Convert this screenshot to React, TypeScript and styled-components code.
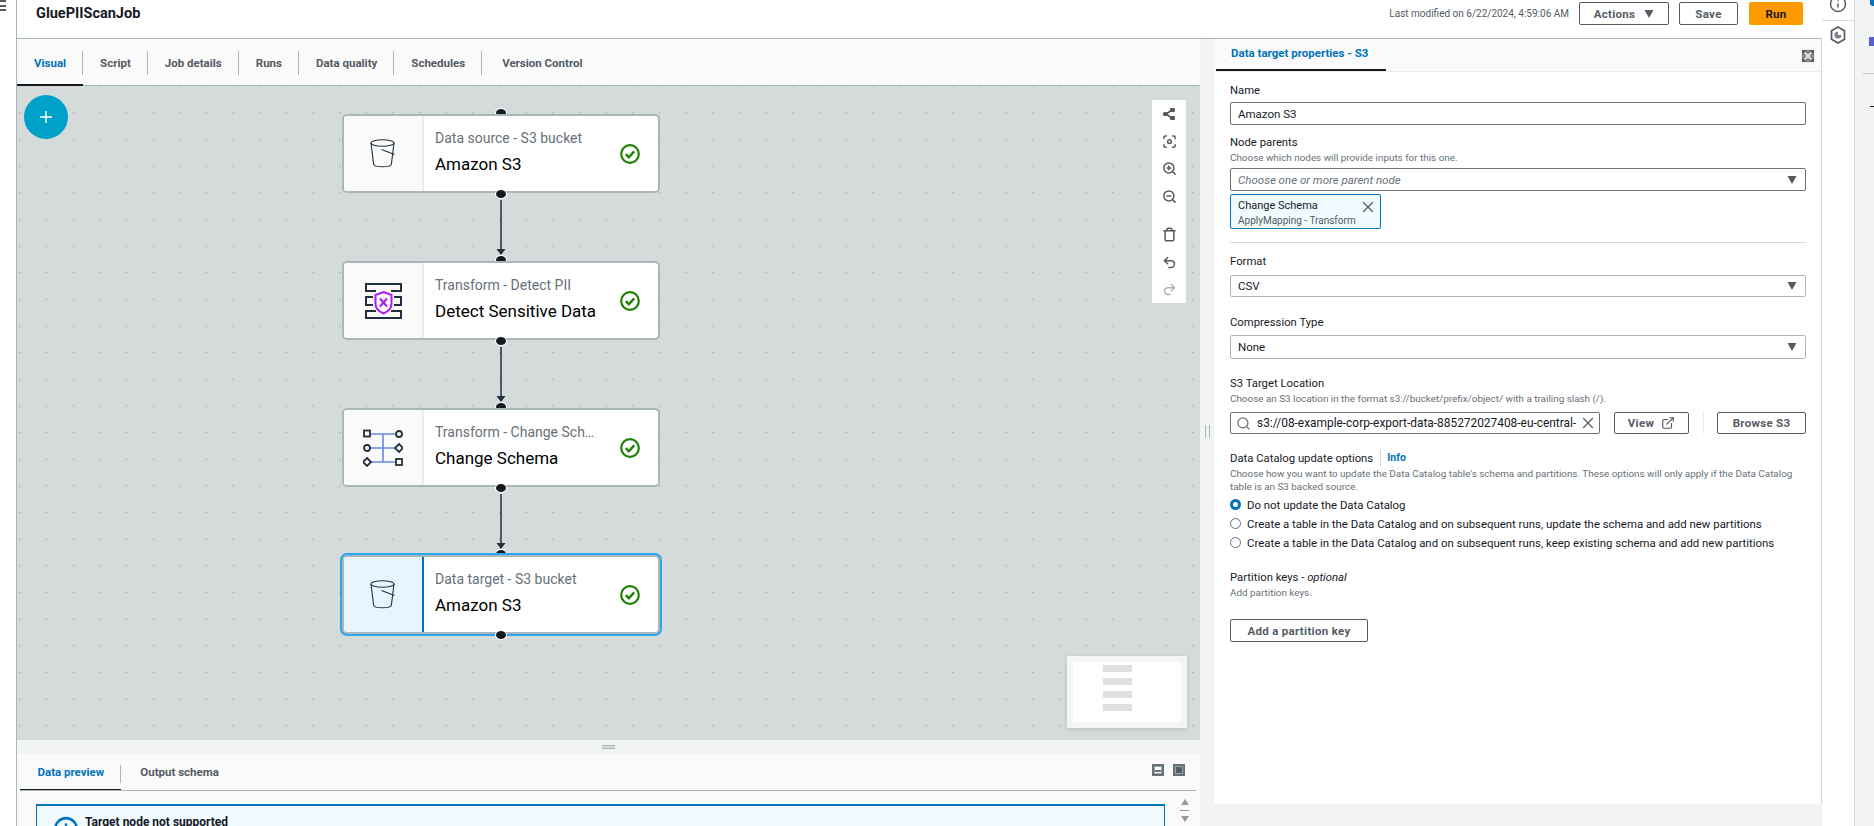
import React from 'react';
import styled, { createGlobalStyle } from 'styled-components';
import { ExternalLink, Focus, Info, Redo2, Search, Trash, Undo2, X, ZoomIn, ZoomOut } from 'lucide-react';

const GlobalStyle = createGlobalStyle`
  html, body {
    margin: 0;
    padding: 0;
    background: #fff;
  }
  body {
    font-family: Roboto, "Liberation Sans", sans-serif;
    color: #16191f;
    overflow: hidden;
  }
  * {
    box-sizing: border-box;
  }
`;

const JOB_TABS = ['Visual', 'Script', 'Job details', 'Runs', 'Data quality', 'Schedules', 'Version Control'];

const RADIO_OPTIONS = [
  'Do not update the Data Catalog',
  'Create a table in the Data Catalog and on subsequent runs, update the schema and add new partitions',
  'Create a table in the Data Catalog and on subsequent runs, keep existing schema and add new partitions',
];

function BucketIcon() {
  return (
    <svg width="26" height="29" viewBox="0 0 26 29" fill="none" stroke="#232f3e" strokeWidth="1.1">
      <ellipse cx="12.5" cy="4" rx="11.5" ry="3.2" />
      <path d="M1 4l2.6 21c.2 1.6 4 2.8 8.9 2.8s8.7-1.2 8.9-2.8L24 4" />
      <path d="M11.5 10.5l13 5" />
    </svg>
  );
}

function DetectPiiIcon() {
  return (
    <svg width="37" height="36" viewBox="0 0 37 36" fill="none">
      <g stroke="#232f3e" strokeWidth="2">
        <path d="M11 8H1V1h35v7H26" />
        <path d="M8 14H1v8h7M29 14h7v8h-7" />
        <path d="M11 28H1v7h35v-7H26" />
      </g>
      <g stroke="#a91cf5" strokeWidth="2">
        <path d="M18.5 9l8 3v9c0 4.5-3.5 7.5-8 9.5-4.5-2-8-5-8-9.5v-9z" />
        <path d="M15 15.5l7 8M22 15.5l-7 8" />
      </g>
    </svg>
  );
}

function ChangeSchemaIcon() {
  return (
    <svg width="40" height="38" viewBox="0 0 40 38" fill="none">
      <g stroke="#688ae8" strokeWidth="1.6">
        <path d="M7 5h25M7 19h25M7 33h25M20 5v28" />
      </g>
      <g stroke="#232f3e" strokeWidth="1.8" fill="#fafafa">
        <rect x="1" y="1.5" width="6" height="6" />
        <circle cx="4" cy="19" r="3" />
        <path d="M4 29l4 4-4 4-4-4z" />
        <circle cx="36" cy="5" r="3" />
        <path d="M36 15l4 4-4 4-4-4z" />
        <rect x="33" y="30" width="6" height="6" />
      </g>
    </svg>
  );
}

function CheckIcon() {
  return (
    <svg width="20" height="20" viewBox="0 0 20 20" fill="none" stroke="#1d8102">
      <circle cx="10" cy="10" r="8.8" strokeWidth="2.2" />
      <path d="M5.8 10.2l3 3 5.4-5.8" strokeWidth="2.4" />
    </svg>
  );
}

function LayoutIcon() {
  return (
    <svg width="14" height="14" viewBox="0 0 14 14" fill="#545b64" stroke="#545b64">
      <path d="M4 7l6-4M4 7l6 4" strokeWidth="1.6" />
      <rect x="1" y="5" width="5" height="4" rx="1.5" stroke="none" />
      <rect x="8" y="1" width="5" height="4" rx="1" stroke="none" />
      <rect x="8" y="9" width="5" height="4" rx="1" stroke="none" />
    </svg>
  );
}

function Caret() {
  return (
    <svg width="10" height="8" viewBox="0 0 10 8" fill="#545b64">
      <path d="M0.5 0h9L5 8z" />
    </svg>
  );
}

function ExpandIcon() {
  return (
    <svg width="12" height="12" viewBox="0 0 12 12" fill="#545b64">
      <path d="M0 0h12v12H0z" opacity="0.7" />
      <path d="M0 0h5L0 5zM12 0H7l5 5zM0 12h5l-5-5zM12 12H7l5-5z" />
      <path d="M2.5 2.5l7 7M9.5 2.5l-7 7" stroke="#fff" strokeWidth="1.3" />
    </svg>
  );
}

function PipelineNode(props: {
  icon: React.ReactNode;
  kind: string;
  name: string;
  selected?: boolean;
}) {
  return (
    <NodeCard $selected={props.selected}>
      <PortTop />
      <NodeIcon $selected={props.selected}>{props.icon}</NodeIcon>
      <NodeText>
        <NodeKind>{props.kind}</NodeKind>
        <NodeName>{props.name}</NodeName>
      </NodeText>
      <NodeStatus>
        <CheckIcon />
      </NodeStatus>
      <PortBottom />
    </NodeCard>
  );
}

function Edge() {
  return (
    <EdgeWrap>
      <svg width="10" height="68" viewBox="0 0 10 68">
        <path d="M5 7v52" stroke="#232f3e" strokeWidth="1.5" />
        <path d="M0.5 56h9L5 62z" fill="#232f3e" />
      </svg>
    </EdgeWrap>
  );
}

export default function App() {
  return (
    <Page>
      <GlobalStyle />
      <LeftRail>
        <Burger />
      </LeftRail>
      <Main>
        <Header>
          <JobTitle>GluePIIScanJob</JobTitle>
          <HeaderActions>
            <Modified>Last modified on 6/22/2024, 4:59:06 AM</Modified>
            <HeaderButton $width={90}>
              Actions
              <Caret />
            </HeaderButton>
            <HeaderButton $width={59}>Save</HeaderButton>
            <RunButton>Run</RunButton>
          </HeaderActions>
        </Header>
        <Body>
          <Workspace>
            <TabBar>
              {JOB_TABS.map((tab, i) => (
                <JobTab key={tab} $active={i === 0} $last={i === JOB_TABS.length - 1}>
                  {tab}
                </JobTab>
              ))}
            </TabBar>
            <Canvas>
              <AddButton>
                <svg width="14" height="14" viewBox="0 0 14 14" stroke="#fff" strokeWidth="1.4">
                  <path d="M7 1v12M1 7h12" />
                </svg>
              </AddButton>
              <NodeColumn>
                <PipelineNode icon={<BucketIcon />} kind="Data source - S3 bucket" name="Amazon S3" />
                <Edge />
                <PipelineNode icon={<DetectPiiIcon />} kind="Transform - Detect PII" name="Detect Sensitive Data" />
                <Edge />
                <PipelineNode icon={<ChangeSchemaIcon />} kind="Transform - Change Schema" name="Change Schema" />
                <Edge />
                <PipelineNode icon={<BucketIcon />} kind="Data target - S3 bucket" name="Amazon S3" selected />
              </NodeColumn>
              <CanvasTools>
                <ToolButton><LayoutIcon /></ToolButton>
                <ToolButton><Focus size={15} strokeWidth={2.4} /></ToolButton>
                <ToolButton><ZoomIn size={15} strokeWidth={2.4} /></ToolButton>
                <ToolButton $gapAfter><ZoomOut size={15} strokeWidth={2.4} /></ToolButton>
                <ToolButton><Trash size={15} strokeWidth={2.4} /></ToolButton>
                <ToolButton><Undo2 size={15} strokeWidth={2.4} /></ToolButton>
                <ToolButton $disabled><Redo2 size={15} strokeWidth={2.4} /></ToolButton>
              </CanvasTools>
              <MiniMap>
                <MiniMapInner>
                  <MiniMapBar />
                  <MiniMapBar />
                  <MiniMapBar />
                  <MiniMapBar />
                </MiniMapInner>
              </MiniMap>
            </Canvas>
            <HorizontalGutter>
              <GutterHandle />
            </HorizontalGutter>
            <BottomPanel>
              <BottomTabs>
                <BottomTab $active>Data preview</BottomTab>
                <BottomTab>Output schema</BottomTab>
                <BottomIcons>
                  <PanelIcon $mode="half" />
                  <PanelIcon $mode="full" />
                </BottomIcons>
              </BottomTabs>
              <AlertRow>
                <Alert>
                  <Info size={26} color="#0073bb" strokeWidth={2.4} />
                  <AlertTitle>Target node not supported</AlertTitle>
                </Alert>
                <ScrollArrows>
                  <ScrollUp />
                  <ScrollLine />
                  <ScrollDown />
                </ScrollArrows>
              </AlertRow>
            </BottomPanel>
          </Workspace>
          <VerticalGutter>
            <VerticalHandle />
          </VerticalGutter>
          <Panel>
            <PanelTabs>
              <PanelTab>Data target properties - S3</PanelTab>
              <ExpandButton>
                <ExpandIcon />
              </ExpandButton>
            </PanelTabs>
            <Form>
              <Field $top={10}>
                <FieldLabel $after={4}>Name</FieldLabel>
                <TextBox>Amazon S3</TextBox>
              </Field>
              <Field $top={9}>
                <FieldLabel>Node parents</FieldLabel>
                <FieldHint $after={3}>Choose which nodes will provide inputs for this one.</FieldHint>
                <TextBox>
                  <Placeholder>Choose one or more parent node</Placeholder>
                  <Caret />
                </TextBox>
                <ParentChip>
                  <ChipText>
                    <ChipName>Change Schema</ChipName>
                    <ChipKind>ApplyMapping - Transform</ChipKind>
                  </ChipText>
                  <X size={18} color="#545b64" strokeWidth={1.7} />
                </ParentChip>
              </Field>
              <Divider />
              <Field $top={10}>
                <FieldLabel $after={6}>Format</FieldLabel>
                <TextBox $height={22} $soft>
                  CSV
                  <Caret />
                </TextBox>
              </Field>
              <Field $top={17}>
                <FieldLabel $after={5}>Compression Type</FieldLabel>
                <TextBox $height={24} $soft>
                  None
                  <Caret />
                </TextBox>
              </Field>
              <Field $top={16}>
                <FieldLabel>S3 Target Location</FieldLabel>
                <FieldHint $after={6}>
                  Choose an S3 location in the format s3://bucket/prefix/object/ with a trailing slash (/).
                </FieldHint>
                <LocationRow>
                  <SearchBox>
                    <Search size={15} color="#687078" />
                    <SearchValue>s3://08-example-corp-export-data-885272027408-eu-central-</SearchValue>
                    <X size={18} color="#545b64" strokeWidth={1.7} />
                  </SearchBox>
                  <ViewButton>
                    View
                    <ExternalLink size={14} />
                  </ViewButton>
                  <LocationDivider />
                  <BrowseButton>Browse S3</BrowseButton>
                </LocationRow>
              </Field>
              <Field $top={16}>
                <LabelRow>
                  <FieldLabel>Data Catalog update options</FieldLabel>
                  <InfoLink>Info</InfoLink>
                </LabelRow>
                <FieldHint $after={2} $lines>
                  Choose how you want to update the Data Catalog table's schema and partitions. These options will only
                  apply if the Data Catalog table is an S3 backed source.
                </FieldHint>
                {RADIO_OPTIONS.map((option, i) => (
                  <RadioRow key={option}>
                    <Radio $checked={i === 0} />
                    {option}
                  </RadioRow>
                ))}
              </Field>
              <Field $top={17}>
                <FieldLabel>
                  Partition keys - <em>optional</em>
                </FieldLabel>
                <FieldHint $after={19}>Add partition keys.</FieldHint>
                <PartitionButton>Add a partition key</PartitionButton>
              </Field>
            </Form>
          </Panel>
        </Body>
      </Main>
      <SideRail>
        <SideRailItem>
          <Info size={18} color="#545b64" strokeWidth={2} />
        </SideRailItem>
        <SideRailItem>
          <svg width="16" height="18" viewBox="0 0 16 18" fill="none" stroke="#545b64" strokeWidth="1.7">
            <path d="M8 1l6.5 3.8v8.4L8 17l-6.5-3.8V4.800z" />
            <path d="M8 5.500A3.500 3.500 0 1 0 11.500 9H8z" fill="#545b64" stroke="none" opacity="0.75" />
          </svg>
        </SideRailItem>
      </SideRail>
      <FarRail>
        <FarBlue />
        <FarPurple />
        <FarLine />
        <FarDash />
      </FarRail>
    </Page>
  );
}

const Page = styled.div`
  display: flex;
  width: 1874px;
  height: 826px;
  overflow: hidden;
  background: #f2f3f3;
`;

const LeftRail = styled.div`
  flex: 0 0 17px;
  background: #fff;
  border-right: 1px solid #aab7b8;
`;

const Burger = styled.div`
  width: 6px;
  height: 11px;
  border-top: 2px solid #545b64;
  border-bottom: 2px solid #545b64;
  position: relative;
  &::after {
    content: '';
    position: absolute;
    left: 0;
    right: 0;
    top: 2.5px;
    height: 2px;
    background: #545b64;
  }
`;

const Main = styled.div`
  flex: 0 0 1805px;
  display: flex;
  flex-direction: column;
`;

const Header = styled.header`
  flex: 0 0 39px;
  display: flex;
  align-items: flex-start;
  justify-content: space-between;
  padding: 2px 19px 0 19px;
  background: #fff;
  border-bottom: 1px solid #aab7b8;
`;

const JobTitle = styled.h1`
  margin: 3px 0 0;
  font-size: 14.5px;
  line-height: 18px;
  font-weight: 700;
  color: #16191f;
`;

const HeaderActions = styled.div`
  display: flex;
  align-items: center;
  gap: 10px;
`;

const Modified = styled.span`
  font-size: 10px;
  color: #545b64;
`;

const HeaderButton = styled.button<{ $width: number }>`
  width: ${(p) => p.$width}px;
  height: 23px;
  display: inline-flex;
  align-items: center;
  justify-content: center;
  gap: 9px;
  padding: 0;
  background: #fff;
  border: 1px solid #545b64;
  border-radius: 2px;
  font: 700 11.5px Roboto, sans-serif;
  letter-spacing: 0.3px;
  color: #545b64;
`;

const RunButton = styled.button`
  width: 54px;
  height: 23px;
  margin-left: 1px;
  padding: 0;
  background: #ff9900;
  border: 0;
  border-radius: 2px;
  font: 700 11.5px Roboto, sans-serif;
  letter-spacing: 0.3px;
  color: #16191f;
`;

const Body = styled.div`
  flex: 1;
  min-height: 0;
  display: flex;
`;

const Workspace = styled.div`
  flex: 0 0 1183px;
  display: flex;
  flex-direction: column;
`;

const TabBar = styled.nav`
  flex: 0 0 47px;
  display: flex;
  align-items: stretch;
  background: #fafafa;
  border-bottom: 1px solid #aab7b8;
`;

const JobTab = styled.div<{ $active?: boolean; $last?: boolean }>`
  position: relative;
  display: flex;
  align-items: center;
  padding: 2px 17px 0 ${(p) => (p.$last ? '20px' : '17px')};
  font-size: 11.5px;
  font-weight: 700;
  color: ${(p) => (p.$active ? '#0073bb' : '#545b64')};
  border-bottom: 2px solid ${(p) => (p.$active ? '#16191f' : 'transparent')};
  margin-bottom: -1px;
  &::after {
    content: '';
    display: ${(p) => (p.$last ? 'none' : 'block')};
    position: absolute;
    right: 0;
    top: 12px;
    height: 24px;
    width: 1px;
    background: #aab7b8;
  }
`;

const Canvas = styled.div`
  position: relative;
  isolation: isolate;
  flex: 0 0 654px;
  padding: 28px 0 0 325px;
  background-color: #d5dbdb;
  background-image: radial-gradient(circle, #8f9a9c 0.8px, transparent 1px);
  background-size: 26.67px 26.67px;
  background-position: -10.3px -13.3px;
  overflow: hidden;
`;

const AddButton = styled.button`
  position: absolute;
  left: 7px;
  top: 9px;
  width: 44px;
  height: 44px;
  display: flex;
  align-items: center;
  justify-content: center;
  padding: 0;
  border: 0;
  border-radius: 50%;
  background: #00a1c9;
`;

const NodeColumn = styled.div`
  width: 318px;
  display: flex;
  flex-direction: column;
`;

const NodeCard = styled.div<{ $selected?: boolean }>`
  position: relative;
  height: 79px;
  display: flex;
  background: #fff;
  border: 2px solid #aab7b8;
  border-radius: 5px;
  box-shadow: ${(p) => (p.$selected ? '0 0 0 2px #2ea6ee' : 'none')};
`;

const PortTop = styled.span`
  position: absolute;
  left: 50%;
  top: -7px;
  width: 10px;
  height: 8px;
  margin-left: -5px;
  border-radius: 50%;
  background: #16191f;
  box-shadow: 0 0 0 1px #fff;
  z-index: -1;
`;

const PortBottom = styled.span`
  position: absolute;
  left: 50%;
  bottom: -7px;
  width: 10px;
  height: 8px;
  margin-left: -5px;
  border-radius: 50%;
  background: #16191f;
  box-shadow: 0 0 0 1px #fff;
  z-index: 1;
`;

const NodeIcon = styled.div<{ $selected?: boolean }>`
  flex: 0 0 80px;
  display: flex;
  align-items: center;
  justify-content: center;
  background: ${(p) => (p.$selected ? '#e8f5ff' : '#fafafa')};
  border-right: 2px solid ${(p) => (p.$selected ? '#0073bb' : '#eaeded')};
  border-radius: 3px 0 0 3px;
`;

const NodeText = styled.div`
  flex: 1;
  min-width: 0;
  display: flex;
  flex-direction: column;
  padding: 13px 0 0 11px;
`;

const NodeKind = styled.div`
  width: 164px;
  font-size: 14px;
  line-height: 18px;
  color: #687078;
  white-space: nowrap;
  overflow: hidden;
  text-overflow: ellipsis;
`;

const NodeName = styled.div`
  margin-top: 7px;
  font-size: 17px;
  line-height: 20px;
  color: #000;
  white-space: nowrap;
`;

const NodeStatus = styled.div`
  flex: 0 0 50px;
  display: flex;
  align-items: center;
  padding-left: 12px;
`;

const EdgeWrap = styled.div`
  height: 68px;
  display: flex;
  justify-content: center;
  position: relative;
  z-index: 0;
`;

const CanvasTools = styled.div`
  position: absolute;
  left: 1135px;
  top: 14px;
  width: 34px;
  height: 203px;
  padding-top: 0;
  display: flex;
  flex-direction: column;
  align-items: center;
  background: #fff;
`;

const ToolButton = styled.div<{ $gapAfter?: boolean; $disabled?: boolean }>`
  flex: 0 0 27.5px;
  display: flex;
  align-items: center;
  justify-content: center;
  margin-bottom: ${(p) => (p.$gapAfter ? '11px' : '0')};
  color: ${(p) => (p.$disabled ? '#aab7b8' : '#545b64')};
`;

const MiniMap = styled.div`
  position: absolute;
  left: 1050px;
  top: 570px;
  width: 120px;
  height: 72px;
  padding: 6px;
  background: #f5f5f5;
  box-shadow: 0 1px 4px rgba(0, 0, 0, 0.15);
`;

const MiniMapInner = styled.div`
  height: 60px;
  padding-top: 3px;
  display: flex;
  flex-direction: column;
  align-items: center;
  gap: 6px;
  background: #fff;
`;

const MiniMapBar = styled.div`
  width: 29px;
  height: 7px;
  margin-right: 19px;
  background: #e0e0e0;
`;

const HorizontalGutter = styled.div`
  flex: 0 0 14px;
  display: flex;
  align-items: center;
  justify-content: center;
  background: #f2f3f3;
`;

const GutterHandle = styled.div`
  width: 13px;
  height: 4px;
  border-top: 1px solid #aab7b8;
  border-bottom: 1px solid #aab7b8;
  background: #d5dbdb;
`;

const BottomPanel = styled.section`
  flex: 1;
  min-height: 0;
  background: #fafafa;
  padding: 0 4px 0 3px;
  overflow: hidden;
`;

const BottomTabs = styled.div`
  height: 37px;
  display: flex;
  align-items: stretch;
  border-bottom: 1px solid #aab7b8;
`;

const BottomTab = styled.div<{ $active?: boolean }>`
  display: flex;
  align-items: center;
  padding: 0 17px 0 ${(p) => (p.$active ? '17.5px' : '19px')};
  font-size: 11.5px;
  font-weight: 700;
  color: ${(p) => (p.$active ? '#0073bb' : '#545b64')};
  position: relative;
  ${(p) => (p.$active ? 'box-shadow: inset 0 -1px 0 #16191f;' : '')}
  &::after {
    content: '';
    display: ${(p) => (p.$active ? 'block' : 'none')};
    position: absolute;
    right: 0;
    top: 11px;
    height: 18px;
    width: 1px;
    background: #aab7b8;
  }
`;

const BottomIcons = styled.div`
  margin-left: auto;
  display: flex;
  align-items: center;
  gap: 9px;
  padding: 0 11px 4px 0;
`;

const PanelIcon = styled.span<{ $mode: 'half' | 'full' }>`
  width: 12px;
  height: 12px;
  border: 2px solid #687078;
  background: ${(p) =>
    p.$mode === 'half'
      ? 'linear-gradient(#fff 0 4px, #687078 4px 6px, #fff 6px)'
      : '#545b64'};
  box-shadow: inset 0 0 0 1px #9aa5a7;
`;

const AlertRow = styled.div`
  display: flex;
  align-items: flex-start;
  gap: 14px;
  padding: 13px 0 0 16px;
  position: relative;
`;

const Alert = styled.div`
  width: 1129px;
  height: 60px;
  display: flex;
  align-items: flex-start;
  gap: 6px;
  padding: 10px 0 0 16px;
  background: #f1faff;
  border: 1px solid #0073bb;
  border-top-width: 2px;
`;

const AlertTitle = styled.div`
  font-size: 12px;
  line-height: 14px;
  margin-top: -1px;
  font-weight: 700;
  color: #16191f;
`;

const ScrollArrows = styled.div`
  position: absolute;
  right: 4px;
  top: 8px;
  width: 15px;
  display: flex;
  flex-direction: column;
  align-items: center;
  gap: 5px;
`;

const ScrollUp = styled.span`
  width: 0;
  height: 0;
  border-left: 4.5px solid transparent;
  border-right: 4.5px solid transparent;
  border-bottom: 6px solid #8f9a9c;
`;

const ScrollLine = styled.span`
  width: 9px;
  height: 1px;
  background: #8f9a9c;
`;

const ScrollDown = styled.span`
  width: 0;
  height: 0;
  border-left: 4.5px solid transparent;
  border-right: 4.5px solid transparent;
  border-top: 6px solid #8f9a9c;
`;

const VerticalGutter = styled.div`
  flex: 0 0 14px;
  display: flex;
  align-items: center;
  justify-content: center;
  background: #f2f3f3;
`;

const VerticalHandle = styled.div`
  width: 5px;
  height: 13px;
  border-left: 1px solid #aab7b8;
  border-right: 1px solid #aab7b8;
  margin-top: -3px;
`;

const Panel = styled.aside`
  flex: 0 0 608px;
  height: 765px;
  background: #fff;
  border-right: 1px solid #d5dbdb;
  position: relative;
`;

const PanelTabs = styled.div`
  height: 33px;
  display: flex;
  align-items: stretch;
  justify-content: space-between;
  padding: 0 7px 0 2px;
  background: #fafafa;
  border-bottom: 1px solid #eaeded;
`;

const PanelTab = styled.div`
  width: 170px;
  padding: 7px 0 0 15px;
  font-size: 11.5px;
  font-weight: 700;
  color: #0073bb;
  white-space: nowrap;
  border-bottom: 2px solid #16191f;
`;

const ExpandButton = styled.div`
  display: flex;
  align-items: center;
  padding-top: 2px;
`;

const Form = styled.div`
  padding: 0 15px 0 16px;
`;

const Field = styled.div<{ $top: number }>`
  margin-top: ${(p) => p.$top}px;
`;

const FieldLabel = styled.div<{ $after?: number }>`
  height: 16px;
  font-size: 11.3px;
  line-height: 18px;
  color: #16191f;
  margin-bottom: ${(p) => p.$after ?? 0}px;
`;

const FieldHint = styled.div<{ $after?: number; $lines?: boolean }>`
  margin-top: 1px;
  margin-bottom: ${(p) => p.$after ?? 0}px;
  font-size: 9.9px;
  line-height: ${(p) => (p.$lines ? '13px' : '14px')};
  color: #687078;
`;

const LabelRow = styled.div`
  display: flex;
  align-items: center;
  gap: 7px;
`;

const InfoLink = styled.span`
  padding-left: 6px;
  border-left: 1px solid #d5dbdb;
  font-size: 10.5px;
  line-height: 16px;
  font-weight: 700;
  color: #0073bb;
`;

const TextBox = styled.div<{ $height?: number; $soft?: boolean }>`
  height: ${(p) => p.$height ?? 23}px;
  display: flex;
  align-items: center;
  justify-content: space-between;
  padding: 0 8px 0 7px;
  border: 1px solid ${(p) => (p.$soft ? '#aab7b8' : '#687078')};
  border-radius: 2px;
  background: #fff;
  font-size: 11.5px;
  color: #16191f;
`;

const Placeholder = styled.span`
  font-style: italic;
  color: #687078;
`;

const ParentChip = styled.div`
  width: 151px;
  height: 35px;
  margin-top: 3px;
  display: flex;
  align-items: flex-start;
  justify-content: space-between;
  padding: 3px 3px 0 7px;
  background: #f1faff;
  border: 1px solid #0073bb;
  border-radius: 2px;
`;

const ChipText = styled.div`
  display: flex;
  flex-direction: column;
`;

const ChipName = styled.span`
  font-size: 11px;
  line-height: 15px;
  color: #16191f;
`;

const ChipKind = styled.span`
  font-size: 10px;
  line-height: 15px;
  color: #545b64;
`;

const Divider = styled.hr`
  margin: 13px 0 0;
  height: 1px;
  border: 0;
  background: #d5dbdb;
`;

const LocationRow = styled.div`
  display: flex;
  align-items: stretch;
  height: 22px;
`;

const SearchBox = styled.div`
  width: 370px;
  display: flex;
  align-items: center;
  gap: 5px;
  padding: 0 2px 0 5px;
  border: 1px solid #687078;
  border-radius: 2px;
`;

const SearchValue = styled.span`
  flex: 1;
  min-width: 0;
  padding-left: 1px;
  white-space: nowrap;
  font-size: 11.9px;
  color: #16191f;
`;

const ViewButton = styled.button`
  width: 75px;
  margin-left: 14px;
  display: flex;
  align-items: center;
  justify-content: center;
  gap: 7px;
  padding: 0;
  background: #fff;
  border: 1px solid #545b64;
  border-radius: 2px;
  font: 700 11.5px Roboto, sans-serif;
  letter-spacing: 0.3px;
  color: #545b64;
`;

const LocationDivider = styled.span`
  width: 1px;
  margin: 0 13.5px;
  background: #eaeded;
`;

const BrowseButton = styled.button`
  flex: 1;
  padding: 0;
  background: #fff;
  border: 1px solid #545b64;
  border-radius: 2px;
  font: 700 11.5px Roboto, sans-serif;
  letter-spacing: 0.3px;
  color: #545b64;
`;

const RadioRow = styled.div`
  height: 19px;
  display: flex;
  align-items: center;
  gap: 6px;
  font-size: 11.4px;
  color: #16191f;
  white-space: nowrap;
`;

const Radio = styled.span<{ $checked?: boolean }>`
  width: 11px;
  height: 11px;
  flex: none;
  border-radius: 50%;
  background: #fff;
  border: ${(p) => (p.$checked ? '3px solid #0073bb' : '1px solid #687078')};
`;

const PartitionButton = styled.button`
  display: block;
  width: 138px;
  height: 23px;
  padding: 0;
  background: #fff;
  border: 1px solid #545b64;
  border-radius: 2px;
  font: 700 11.5px Roboto, sans-serif;
  letter-spacing: 0.3px;
  color: #545b64;
`;

const SideRail = styled.div`
  flex: 0 0 33px;
  height: 826px;
  background: #fff;
  border-right: 1px solid #d5dbdb;
  display: flex;
  flex-direction: column;
`;

const SideRailItem = styled.div`
  height: 28px;
  display: flex;
  align-items: center;
  justify-content: center;
  &:first-child {
    height: 21px;
    align-items: flex-end;
    padding-bottom: 7px;
    border-bottom: 1px solid #d5dbdb;
  }
`;

const FarRail = styled.div`
  flex: 1;
  display: flex;
  flex-direction: column;
  align-items: flex-end;
  background: #f2f3f3;
`;

const FarBlue = styled.div`
  width: 4px;
  height: 6px;
  border-radius: 0 0 0 3px;
  background: #0073bb;
`;

const FarPurple = styled.div`
  width: 5px;
  height: 9px;
  margin-top: 31px;
  background: #5a5fd0;
`;

const FarLine = styled.div`
  width: 11px;
  height: 1px;
  margin-top: 27px;
  background: #c7cdcd;
`;

const FarDash = styled.div`
  width: 4px;
  height: 1px;
  margin-top: 32px;
  background: #16191f;
`;
